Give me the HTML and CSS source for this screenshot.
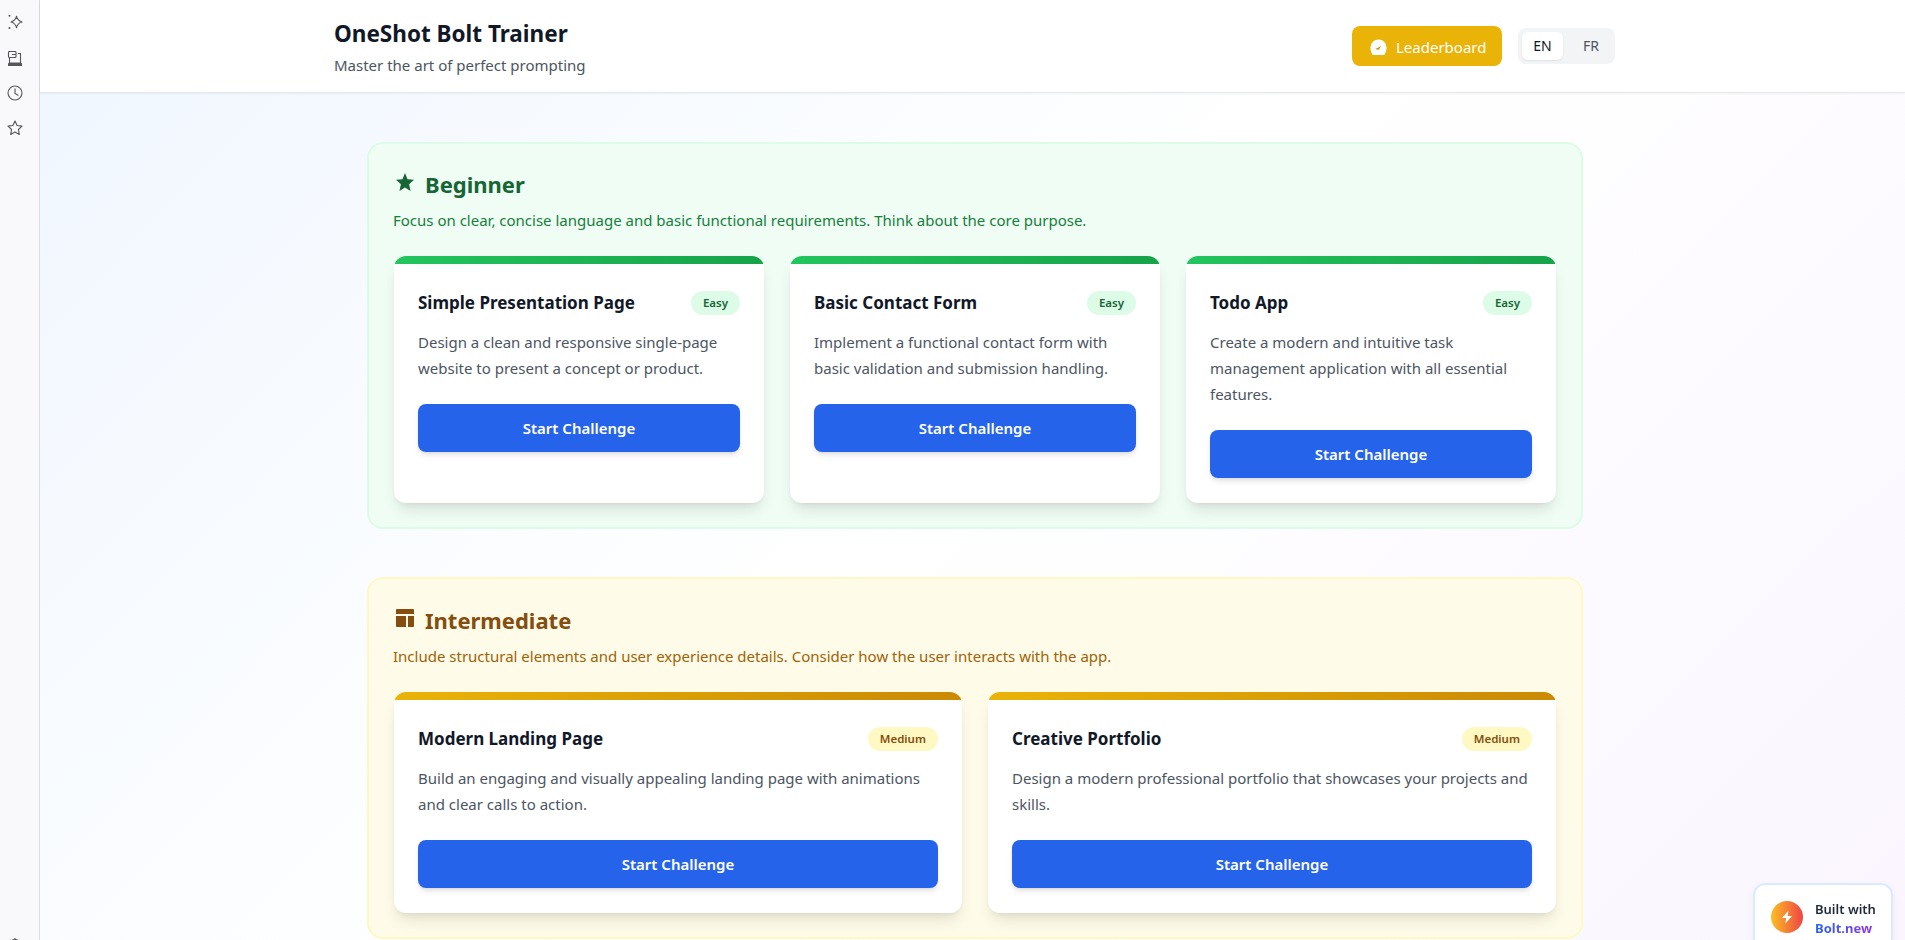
FILE: index.html
```html
<!DOCTYPE html>
<html lang="en">
<head>
  <meta charset="UTF-8" />
  <meta name="viewport" content="width=device-width, initial-scale=1.0"/>
  <title>OneShot Bolt Trainer</title>
  <link rel="stylesheet" href="styles.css">
</head>
<body>

  <aside class="sidebar">
    <svg class="side-icon" viewBox="0 0 16 16" fill="none" stroke="#55555c" stroke-width="1.1" stroke-linejoin="round">
      <path d="M9.500 2.200 C10 5.600 11.200 6.800 15 8 C11.200 9.200 10 10.400 9.500 13.800 C9 10.400 7.800 9.200 4 8 C7.800 6.800 9 5.600 9.500 2.200 Z"/>
      <circle cx="2.500" cy="1.800" r="1" fill="#55555c" stroke="none"/>
      <circle cx="2.500" cy="14" r="1" fill="#55555c" stroke="none"/>
    </svg>
    <svg class="side-icon laptop" viewBox="0 0 16 16" fill="none" stroke="#55555c" stroke-width="1.1">
      <rect x="1.500" y="0.500" width="7.500" height="6" rx="1"/>
      <path d="M5 3.500h4M11 2.500h2.500v9.500M2.500 6.500V12h11"/>
      <rect x="1" y="12" width="14" height="3" rx="0.600" fill="#55555c" stroke="none"/>
    </svg>
    <svg class="side-icon clock" viewBox="0 0 16 16" fill="none" stroke="#55555c" stroke-width="1.1" stroke-linecap="round">
      <circle cx="8" cy="8" r="7"/>
      <path d="M8 3.800V8.500L11 10.200"/>
    </svg>
    <svg class="side-icon" viewBox="0 0 16 16" fill="none" stroke="#55555c" stroke-width="1.1" stroke-linejoin="round">
      <path d="M8 1l2.100 4.500 4.900.6-3.600 3.400.9 4.900L8 12.100 3.700 14.400l.9-4.900L1 6.100l4.900-.6z"/>
    </svg>
    <svg class="side-icon gear" viewBox="0 0 16 16" fill="none" stroke="#55555c" stroke-width="1.1">
      <circle cx="8" cy="8" r="5.500"/>
      <circle cx="8" cy="8" r="2"/>
      <path d="M8 1v1.500M3 3l1 1M13 3l-1 1"/>
    </svg>
  </aside>

  <div class="page">
    <header class="topbar">
      <div class="topbar-inner">
        <div>
          <h1>OneShot Bolt Trainer</h1>
          <p class="tagline">Master the art of perfect prompting</p>
        </div>
        <div class="topbar-actions">
          <button class="leaderboard">
            <svg class="leaderboard-icon" viewBox="0 0 18 18">
              <path d="M9 .5a8.500 8.500 0 0 1 8.500 8.500c0 3-.8 5.500-2.300 8H2.800C1.300 14.500.5 12 .5 9A8.500 8.500 0 0 1 9 .5z" fill="#fff"/>
              <path d="M5.500 10.500l6.500-3-3 4.200z" fill="#c79a0b"/>
            </svg>
            Leaderboard
          </button>
          <div class="lang">
            <span class="lang-btn active">EN</span>
            <span class="lang-btn">FR</span>
          </div>
        </div>
      </div>
    </header>

    <main class="content">
      <section class="level beginner">
        <h2>
          <svg class="level-icon" viewBox="2 2 20 19" preserveAspectRatio="none"><path d="M12 17.270L18.180 21l-1.640-7.030L22 9.240l-7.190-.610L12 2 9.190 8.630 2 9.240l5.460 4.730L5.820 21z"/></svg>
          Beginner
        </h2>
        <p class="level-desc">Focus on clear, concise language and basic functional requirements. Think about the core purpose.</p>
        <div class="cards three">
          <div class="card">
            <div class="card-bar"></div>
            <div class="card-body">
              <div class="card-head"><h3>Simple Presentation Page</h3><span class="badge">Easy</span></div>
              <p class="card-desc">Design a clean and responsive single-page website to present a concept or product.</p>
              <button class="start">Start Challenge</button>
            </div>
          </div>
          <div class="card">
            <div class="card-bar"></div>
            <div class="card-body">
              <div class="card-head"><h3>Basic Contact Form</h3><span class="badge">Easy</span></div>
              <p class="card-desc">Implement a functional contact form with basic validation and submission handling.</p>
              <button class="start">Start Challenge</button>
            </div>
          </div>
          <div class="card">
            <div class="card-bar"></div>
            <div class="card-body">
              <div class="card-head"><h3>Todo App</h3><span class="badge">Easy</span></div>
              <p class="card-desc">Create a modern and intuitive task management application with all essential features.</p>
              <button class="start">Start Challenge</button>
            </div>
          </div>
        </div>
      </section>

      <section class="level intermediate">
        <h2>
          <svg class="level-icon" viewBox="0 0 18 18"><path d="M1 0h16a1 1 0 0 1 1 1v4H0V1a1 1 0 0 1 1-1zM0 7h10v11H1a1 1 0 0 1-1-1zM12 7h6v10a1 1 0 0 1-1 1h-5z"/></svg>
          Intermediate
        </h2>
        <p class="level-desc">Include structural elements and user experience details. Consider how the user interacts with the app.</p>
        <div class="cards two">
          <div class="card">
            <div class="card-bar"></div>
            <div class="card-body">
              <div class="card-head"><h3>Modern Landing Page</h3><span class="badge">Medium</span></div>
              <p class="card-desc">Build an engaging and visually appealing landing page with animations and clear calls to action.</p>
              <button class="start">Start Challenge</button>
            </div>
          </div>
          <div class="card">
            <div class="card-bar"></div>
            <div class="card-body">
              <div class="card-head"><h3>Creative Portfolio</h3><span class="badge">Medium</span></div>
              <p class="card-desc">Design a modern professional portfolio that showcases your projects and skills.</p>
              <button class="start">Start Challenge</button>
            </div>
          </div>
        </div>
      </section>
    </main>
  </div>

  <div class="built">
    <span class="built-logo">
      <svg viewBox="0 0 16 16"><path d="M9.500 1.500L3 9h4.200l-.9 5.500L13 7H8.600z" fill="#fff"/></svg>
    </span>
    <div class="built-text">
      <div>Built with</div>
      <div class="built-name">Bolt.new</div>
    </div>
  </div>

</body>
</html>
```

FILE: styles.css
```css
* {
  box-sizing: border-box;
}

body {
  margin: 0;
  height: 100vh;
  overflow: hidden;
  display: flex;
  font-family: "Noto Sans", Arial, sans-serif;
  color: #111827;
  background: linear-gradient(135deg, #eff6ff 0%, #ffffff 50%, #faf5ff 100%);
}

h1, h2, h3, p {
  margin: 0;
}

/* browser side strip */
.sidebar {
  flex: 0 0 40px;
  display: flex;
  flex-direction: column;
  padding: 14px 0 0 7px;
  gap: 19px;
  background: #f9f9fb;
  border-right: 1px solid #dcdce0;
}

.side-icon {
  flex: none;
  width: 16px;
  height: 16px;
}

.laptop {
  margin-top: 2px;
}

.clock {
  margin-top: -1px;
}

.gear {
  margin-top: auto;
  margin-bottom: -13px;
}

.page {
  flex: 1;
  min-width: 0;
}

.topbar {
  height: 93px;
  background: #fff;
  border-bottom: 1px solid #e5e7eb;
  box-shadow: 0 1px 2px rgba(0, 0, 0, 0.05);
}

.topbar-inner {
  width: 1281px;
  margin-left: 294px;
  height: 100%;
  display: flex;
  align-items: center;
  justify-content: space-between;
}

h1 {
  font-size: 22.500px;
  line-height: 32px;
  font-weight: 700;
}

.tagline {
  font-size: 15px;
  line-height: 20px;
  margin-top: 5px;
  color: #4b5563;
}

.topbar-actions {
  display: flex;
  align-items: center;
  gap: 16px;
}

.leaderboard {
  display: flex;
  align-items: center;
  gap: 9px;
  height: 40px;
  width: 150px;
  padding: 2px 0 0 18px;
  border: none;
  border-radius: 8px;
  background: #eab308;
  color: #fff;
  font: inherit;
  font-size: 15px;
}

.leaderboard-icon {
  width: 17px;
  height: 17px;
}

.lang {
  display: flex;
  gap: 8px;
  height: 36px;
  padding: 4px;
  border-radius: 8px;
  background: #f3f4f6;
}

.lang-btn {
  width: 40px;
  line-height: 28px;
  border-radius: 6px;
  text-align: center;
  font-size: 14px;
  color: #4b5563;
}

.lang-btn.active {
  width: 41px;
  background: #fff;
  color: #111827;
  box-shadow: 0 1px 2px rgba(0, 0, 0, 0.08);
}

.content {
  width: 1216px;
  margin-left: 327px;
  padding-top: 49px;
}

.level {
  border: 2px solid;
  border-radius: 16px;
  padding: 24px 25px;
  margin-bottom: 48px;
}

.beginner {
  background: #f0fdf4;
  border-color: #dcfce7;
}

.intermediate {
  padding-top: 25px;
  background: #fefce8;
  border-color: #fef9c3;
}

h2 {
  display: flex;
  align-items: center;
  gap: 11px;
  font-size: 22px;
  line-height: 32px;
  font-weight: 700;
}

.level-icon {
  width: 18px;
  height: 18px;
  margin: -4px 0 0 2px;
  fill: currentColor;
}

.beginner h2 {
  color: #166534;
}

.intermediate h2 {
  color: #854d0e;
}

.level-desc {
  margin: 8px 0 0 -1px;
  font-size: 15px;
  line-height: 24px;
}

.beginner .level-desc {
  color: #15803d;
}

.intermediate .level-desc {
  color: #a16207;
}

.cards {
  display: grid;
  gap: 26px;
  margin-top: 24px;
}

.three {
  grid-template-columns: repeat(3, 1fr);
}

.two {
  grid-template-columns: repeat(2, 1fr);
}

.card {
  overflow: hidden;
  border-radius: 12px;
  background: #fff;
  box-shadow: 0 10px 15px -3px rgba(0, 0, 0, 0.1), 0 4px 6px -4px rgba(0, 0, 0, 0.1);
}

.card-bar {
  height: 8px;
}

.beginner .card-bar {
  background: linear-gradient(90deg, #22c55e, #16a34a);
}

.intermediate .card-bar {
  background: linear-gradient(90deg, #eab308, #ca8a04);
}

.card-body {
  display: flex;
  flex-direction: column;
  padding: 25px 24px 25px;
}

.card-head {
  display: flex;
  align-items: center;
  justify-content: space-between;
  min-height: 28px;
  margin-bottom: 12px;
}

h3 {
  font-size: 17px;
  line-height: 28px;
  font-weight: 700;
  color: #111827;
}

.badge {
  height: 24px;
  padding: 0 12px;
  border-radius: 12px;
  font-size: 11.500px;
  line-height: 24px;
  font-weight: 600;
}

.beginner .badge {
  background: #dcfce7;
  color: #166534;
}

.intermediate .badge {
  background: #fef9c3;
  color: #854d0e;
}

.card-desc {
  font-size: 15px;
  line-height: 26px;
  color: #4b5563;
  margin-bottom: 23px;
}

.start {
  height: 48px;
  border: none;
  border-radius: 8px;
  background: #2563eb;
  color: #fff;
  font: inherit;
  font-size: 15px;
  font-weight: 600;
  box-shadow: 0 4px 6px -1px rgba(0, 0, 0, 0.1), 0 2px 4px -2px rgba(0, 0, 0, 0.1);
}

.built {
  position: fixed;
  left: 1753px;
  top: 883px;
  width: 140px;
  height: 70px;
  display: flex;
  gap: 12px;
  padding: 16px;
  border: 2px solid #dbeafe;
  border-radius: 12px;
  background: #fff;
  font-size: 13px;
  font-weight: 600;
  color: #1f2937;
  box-shadow: 0 4px 10px rgba(0, 0, 0, 0.05);
}

.built-logo {
  flex: 0 0 32px;
  width: 32px;
  height: 32px;
  display: flex;
  align-items: center;
  justify-content: center;
  border-radius: 50%;
  background: linear-gradient(90deg, #fbbf24, #ef4444);
}

.built-logo svg {
  width: 16px;
  height: 16px;
}

.built-text {
  line-height: 20px;
  margin-top: -2px;
  white-space: nowrap;
}

.built-name {
  line-height: 19px;
  font-weight: 700;
  background: linear-gradient(90deg, #2563eb, #9333ea);
  -webkit-background-clip: text;
  background-clip: text;
  color: transparent;
}
```
